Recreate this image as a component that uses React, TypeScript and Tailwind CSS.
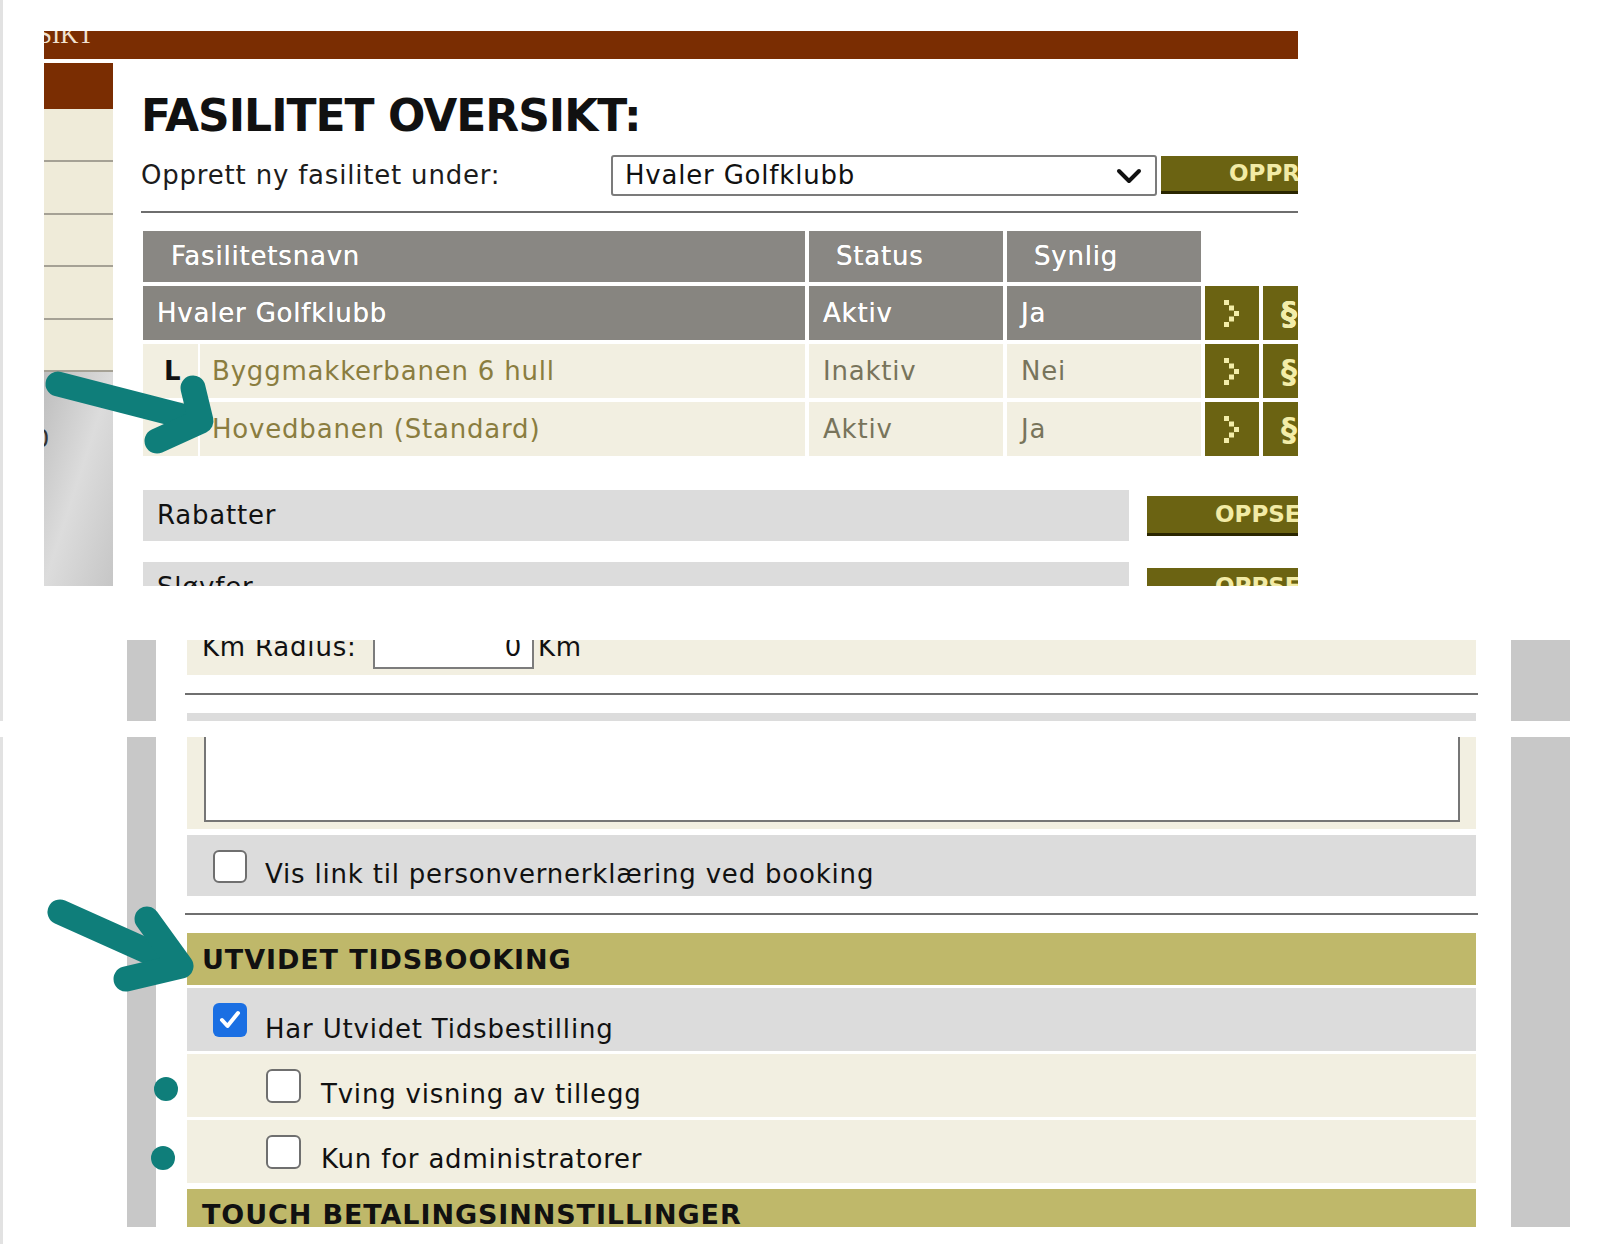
import React from "react";

const Chevron = () => (
  <svg width="18" height="28" viewBox="0 0 18 28">
    <rect x="1" y="1" width="5" height="5" fill="#f3eda8" />
    <rect x="6" y="6.5" width="5" height="5" fill="#f3eda8" />
    <rect x="11" y="12" width="5" height="5" fill="#f3eda8" />
    <rect x="6" y="17.5" width="5" height="5" fill="#f3eda8" />
    <rect x="1" y="23" width="5" height="5" fill="#f3eda8" />
  </svg>
);

const Buttons = () => (
  <>
    <div className="w-[54px] shrink-0 bg-[#6b6312] flex items-center justify-center">
      <Chevron />
    </div>
    <div className="w-[54px] shrink-0 bg-[#6b6312] flex items-center pl-[18px] text-[32px] font-bold text-[#f3eda8] leading-none">
      §
    </div>
  </>
);

const Box = ({ checked = false, w = "w-[34px]", h = "h-[33px]" }: { checked?: boolean; w?: string; h?: string }) =>
  checked ? (
    <div className={`${w} ${h} shrink-0 rounded-[6px] bg-[#1a6fe3] flex items-center justify-center`}>
      <svg width="26" height="24" viewBox="0 0 26 24">
        <path d="M5 12 L10.5 18 L21 5" stroke="white" strokeWidth="4" fill="none" strokeLinecap="round" strokeLinejoin="round" />
      </svg>
    </div>
  ) : (
    <div className={`${w} ${h} shrink-0 rounded-[6px] border-2 border-[#6f6f6f] bg-white`} />
  );

export default function App() {
  return (
    <div className="relative w-[1601px] h-[1244px] overflow-hidden bg-white font-['DejaVu_Sans',sans-serif] text-[26px] tracking-[0.8px] text-[#141414]">
      {/* Band A */}
      <div className="h-[721px] border-l-[3px] border-[#e2e2e2]">
        {/* Section 1 */}
        <div className="pt-[31px] pl-[41px]">
          <div className="w-[1254px] h-[555px] overflow-hidden flex flex-col">
            <div className="h-[28px] shrink-0 bg-[#7a2d02] overflow-hidden">
              <div className="text-[25px] leading-[25px] -mt-[9px] -ml-[6px] text-[#f1e2d0] tracking-normal font-['Liberation_Serif',serif]">
                SIKT
              </div>
            </div>
            <div className="flex flex-1 min-h-0">
              {/* sidebar */}
              <div className="w-[69px] shrink-0 pt-[4px] flex flex-col">
                <div className="h-[46px] bg-[#7a2d02]" />
                <div className="h-[53px] bg-[#efebd9] border-b-2 border-[#a5a195]" />
                <div className="h-[53px] bg-[#efebd9] border-b-2 border-[#a5a195]" />
                <div className="h-[52px] bg-[#efebd9] border-b-2 border-[#a5a195]" />
                <div className="h-[53px] bg-[#efebd9] border-b-2 border-[#a5a195]" />
                <div className="h-[52px] bg-[#efebd9] border-b-2 border-[#a5a195]" />
                <div className="flex-1 bg-linear-to-br from-[#bdbdbd] via-[#dcdcdc] to-[#c6c6c6] overflow-hidden">
                  <div className="mt-[53px] -ml-[10px] text-[24px] leading-[28px] text-[#333]">0</div>
                </div>
              </div>
              {/* main */}
              <div className="flex-1 pl-[28px] flex flex-col">
                <h1 className="mt-[35px] text-[44px] leading-[44px] font-bold tracking-[-1px] text-[#111] whitespace-nowrap">
                  FASILITET OVERSIKT:
                </h1>
                <div className="mt-[17px] h-[41px] flex items-center">
                  <div className="w-[470px] shrink-0 text-[#1c1c1c] whitespace-nowrap">Opprett ny fasilitet under:</div>
                  <div className="w-[546px] h-[41px] shrink-0 border-2 border-[#7b7b7b] rounded-[3px] bg-white flex items-center justify-between pl-[12px] pr-[12px]">
                    <span className="text-[#111]">Hvaler Golfklubb</span>
                    <svg width="28" height="20" viewBox="0 0 28 20">
                      <path d="M4 5 L14 15 L24 5" stroke="#111" strokeWidth="4" fill="none" strokeLinecap="round" strokeLinejoin="round" />
                    </svg>
                  </div>
                  <div className="ml-[4px] w-[300px] h-[38px] shrink-0 self-start mt-[1px] bg-[#6b6312] border-b-[3px] border-[#2a2600] pl-[68px] text-[23px] leading-[35px] font-bold text-[#f2eba6] tracking-normal whitespace-nowrap">
                    OPPRETT
                  </div>
                </div>
                <div className="mt-[15px] h-[2px] shrink-0 bg-[#6e6e6e]" />

                {/* table */}
                <div className="mt-[18px] ml-[2px] flex flex-col gap-[4px]">
                  <div className="h-[51px] flex gap-[4px] text-white [text-shadow:0_0_0.6px_#fff]">
                    <div className="w-[662px] shrink-0 bg-[#898783] pl-[28px] flex items-center">Fasilitetsnavn</div>
                    <div className="w-[194px] shrink-0 bg-[#898783] pl-[27px] flex items-center">Status</div>
                    <div className="w-[194px] shrink-0 bg-[#898783] pl-[27px] flex items-center">Synlig</div>
                  </div>
                  <div className="h-[54px] flex gap-[4px] text-white [text-shadow:0_0_0.6px_#fff]">
                    <div className="w-[662px] shrink-0 bg-[#878580] pl-[14px] flex items-center">Hvaler Golfklubb</div>
                    <div className="w-[194px] shrink-0 bg-[#878580] pl-[14px] flex items-center">Aktiv</div>
                    <div className="w-[194px] shrink-0 bg-[#878580] pl-[14px] flex items-center">Ja</div>
                    <Buttons />
                  </div>
                  <div className="h-[54px] flex gap-[4px]">
                    <div className="w-[662px] shrink-0 flex">
                      <div className="w-[55px] shrink-0 bg-[#f2efe1] pl-[21px] flex items-center text-[#111] font-bold">L</div>
                      <div className="w-[2px] shrink-0 bg-white" />
                      <div className="flex-1 bg-[#f2efe1] pl-[12px] flex items-center text-[#8a7d40]">Byggmakkerbanen 6 hull</div>
                    </div>
                    <div className="w-[194px] shrink-0 bg-[#f2efe1] pl-[14px] flex items-center text-[#78745b]">Inaktiv</div>
                    <div className="w-[194px] shrink-0 bg-[#f2efe1] pl-[14px] flex items-center text-[#78745b]">Nei</div>
                    <Buttons />
                  </div>
                  <div className="h-[54px] flex gap-[4px]">
                    <div className="w-[662px] shrink-0 flex">
                      <div className="w-[55px] shrink-0 bg-[#f2efe1]" />
                      <div className="w-[2px] shrink-0 bg-white" />
                      <div className="flex-1 bg-[#f2efe1] pl-[12px] flex items-center text-[#8a7d40]">Hovedbanen (Standard)</div>
                    </div>
                    <div className="w-[194px] shrink-0 bg-[#f2efe1] pl-[14px] flex items-center text-[#78745b]">Aktiv</div>
                    <div className="w-[194px] shrink-0 bg-[#f2efe1] pl-[14px] flex items-center text-[#78745b]">Ja</div>
                    <Buttons />
                  </div>
                </div>

                {/* Rabatter */}
                <div className="mt-[34px] ml-[2px] h-[51px] shrink-0 flex">
                  <div className="w-[986px] shrink-0 bg-[#dcdcdc] pl-[14px] flex items-center text-[#111]">Rabatter</div>
                  <div className="ml-[18px] mt-[6px] w-[300px] h-[40px] shrink-0 bg-[#6b6312] border-b-[3px] border-[#2a2600] pl-[68px] text-[23px] leading-[37px] font-bold text-[#f2eba6] tracking-normal whitespace-nowrap">
                    OPPSETT
                  </div>
                </div>
                <div className="mt-[21px] ml-[2px] h-[51px] shrink-0 flex">
                  <div className="w-[986px] shrink-0 bg-[#dcdcdc] pl-[14px] flex items-center text-[#111]">Sløyfer</div>
                  <div className="ml-[18px] mt-[6px] w-[300px] h-[40px] shrink-0 bg-[#6b6312] border-b-[3px] border-[#2a2600] pl-[68px] text-[23px] leading-[37px] font-bold text-[#f2eba6] tracking-normal whitespace-nowrap">
                    OPPSETT
                  </div>
                </div>
              </div>
            </div>
          </div>
        </div>

        {/* Section 2 */}
        <div className="mt-[54px] ml-[124px] w-[1443px] h-[81px] overflow-hidden flex">
          <div className="w-[29px] shrink-0 bg-[#c8c8c8]" />
          <div className="w-[31px] shrink-0" />
          <div className="w-[1289px] shrink-0 flex flex-col">
            <div className="h-[35px] shrink-0 bg-[#f2efe1] overflow-hidden flex items-start pl-[15px]">
              <div className="w-[171px] shrink-0 -mt-[8px] leading-[30px] text-[#111] whitespace-nowrap">Km Radius:</div>
              <div className="w-[161px] h-[39px] shrink-0 -mt-[10px] bg-white border-x-2 border-b-2 border-[#7c7c7c] pt-[2px] pr-[10px] leading-[30px] text-right text-[#111]">
                0
              </div>
              <div className="ml-[4px] -mt-[8px] leading-[30px] text-[#111]">Km</div>
            </div>
            <div className="mt-[18px] -mx-[2px] h-[2px] shrink-0 bg-[#6f6f6f]" />
            <div className="mt-[18px] h-[8px] shrink-0 bg-[#dcdcdc]" />
          </div>
          <div className="w-[35px] shrink-0" />
          <div className="w-[59px] shrink-0 bg-[#c8c8c8]" />
        </div>
      </div>

      {/* Band B */}
      <div className="mt-[16px] h-[507px] border-l-[3px] border-[#e2e2e2]">
        <div className="ml-[124px] w-[1443px] h-[490px] overflow-hidden flex">
          <div className="w-[29px] shrink-0 bg-[#c8c8c8]" />
          <div className="w-[31px] shrink-0" />
          <div className="w-[1289px] shrink-0 flex flex-col">
            <div className="h-[92px] shrink-0 bg-[#f2efe1] pl-[17px] pr-[16px] pb-[7px]">
              <div className="h-[85px] bg-white border-x-2 border-b-2 border-[#767676]" />
            </div>
            <div className="mt-[6px] h-[61px] shrink-0 bg-[#dcdcdc] flex items-start pl-[26px]">
              <div className="mt-[15px]">
                <Box />
              </div>
              <div className="ml-[18px] mt-[24px] leading-[30px] text-[#111] whitespace-nowrap">
                Vis link til personvernerklæring ved booking
              </div>
            </div>
            <div className="mt-[17px] -mx-[2px] h-[2px] shrink-0 bg-[#6f6f6f]" />
            <div className="mt-[18px] h-[52px] shrink-0 bg-[#bfb86a] pl-[15px] pt-[12px]">
              <div className="text-[27px] leading-[30px] font-bold tracking-[0.9px] text-[#111] whitespace-nowrap">UTVIDET TIDSBOOKING</div>
            </div>
            <div className="mt-[3px] h-[63px] shrink-0 bg-[#dcdcdc] flex items-start pl-[26px]">
              <div className="mt-[15px]">
                <Box checked h="h-[34px]" />
              </div>
              <div className="ml-[18px] mt-[26px] leading-[30px] text-[#111] whitespace-nowrap">Har Utvidet Tidsbestilling</div>
            </div>
            <div className="mt-[3px] h-[63px] shrink-0 bg-[#f2efe1] flex items-start pl-[79px]">
              <div className="mt-[15px]">
                <Box w="w-[35px]" h="h-[34px]" />
              </div>
              <div className="ml-[20px] mt-[25px] leading-[30px] text-[#111] whitespace-nowrap">Tving visning av tillegg</div>
            </div>
            <div className="mt-[3px] h-[63px] shrink-0 bg-[#f2efe1] flex items-start pl-[79px]">
              <div className="mt-[15px]">
                <Box w="w-[35px]" h="h-[34px]" />
              </div>
              <div className="ml-[20px] mt-[24px] leading-[30px] text-[#111] whitespace-nowrap">Kun for administratorer</div>
            </div>
            <div className="mt-[6px] h-[60px] shrink-0 bg-[#bfb86a] pl-[15px] pt-[11px]">
              <div className="text-[27px] leading-[30px] font-bold tracking-[0.9px] text-[#111] whitespace-nowrap">TOUCH BETALINGSINNSTILLINGER</div>
            </div>
          </div>
          <div className="w-[35px] shrink-0" />
          <div className="w-[59px] shrink-0 bg-[#c8c8c8]" />
        </div>
      </div>

      {/* annotation overlay */}
      <svg className="absolute left-0 top-0 pointer-events-none" width="1601" height="1244" viewBox="0 0 1601 1244">
        <g stroke="#0f7e7a" strokeWidth="25" fill="none" strokeLinecap="round" strokeLinejoin="round">
          <path d="M58 384 L194 419" />
          <path d="M193 388 L201 421 L157 441" />
          <path d="M60 912 L176 964" />
          <path d="M147 919 L181 966 L126 979" />
        </g>
        <circle cx="166" cy="1089" r="12" fill="#0f7e7a" />
        <circle cx="163" cy="1158" r="12" fill="#0f7e7a" />
      </svg>
    </div>
  );
}
